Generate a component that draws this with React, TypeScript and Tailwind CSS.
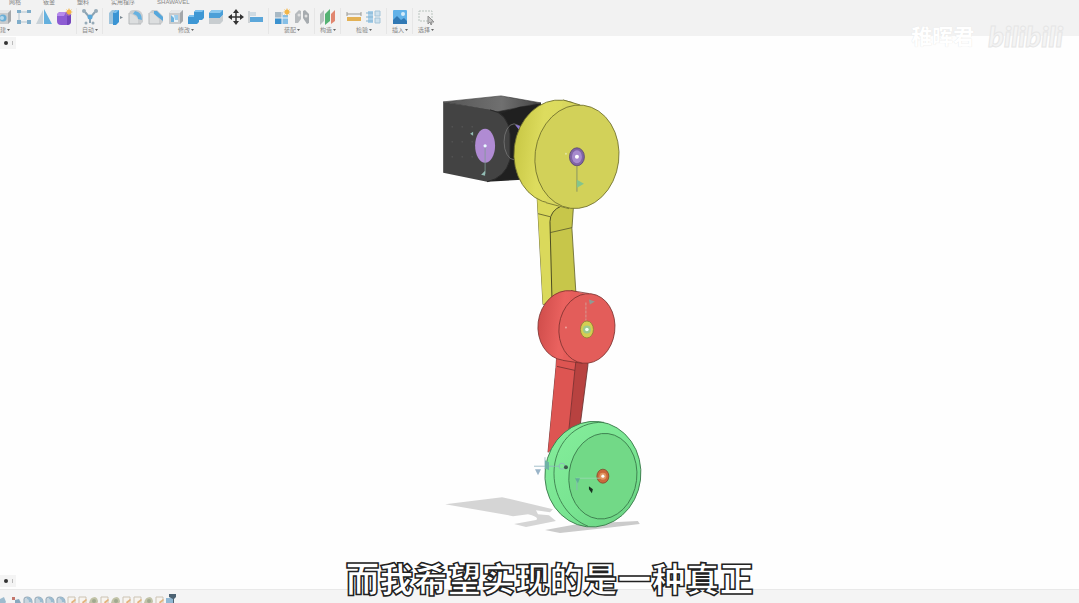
import type { ReactNode } from "react";

const Icon = ({ children }: { children: ReactNode }) => (
  <svg viewBox="0 0 18 18" className="size-[18px]" aria-hidden="true">
    {children}
  </svg>
);

const Cube = ({ children }: { children?: ReactNode }) => (
  <>
    <path d="M2 5 5 2h11v11l-3 3H2z" fill="#c9cbcd" />
    <path d="M2 5 5 2h11l-3 3z" fill="#e6e7e8" />
    <path d="M13 5l3-3v11l-3 3z" fill="#a4a7aa" />
    {children}
  </>
);

const Spark = ({ x, y }: { x: number; y: number }) => (
  <g transform={`translate(${x} ${y})`}>
    <path
      d="M0-4 1-1.500 3-3 1.700-.8 4 0 1.700.8 3 3 1 1.500 0 4-1 1.500-3 3-1.700.8-4 0-1.700-.8-3-3-1-1.500z"
      fill="#f3b13c"
    />
    <circle r="1.800" fill="#f2b648" />
  </g>
);

const icons: Record<string, ReactNode> = {
  box: (
    <Cube>
      <circle cx="8" cy="10" r="3.500" fill="#6aaed6" />
      <circle cx="7" cy="10" r="2" fill="#b5d8ec" />
    </Cube>
  ),
  sketch: (
    <>
      <path d="M4 4h10M4 4v10M4 14h10" stroke="#b4c4cf" fill="none" />
      <path d="M2 2h4v3H2zM12 2h4v3h-4zM2 12h4v4H2zM12 12h4v4h-4z" fill="#7fadca" />
    </>
  ),
  mirror: (
    <>
      <path d="M8 2v14H1z" fill="#c9d2d8" />
      <path d="M9 1 17 16H9z" fill="#64b0de" />
    </>
  ),
  form: (
    <>
      <rect x="2" y="4" width="14" height="13" rx="4" fill="#8d5cd3" />
      <path d="M2 8q0-4 4-4h5l-2 4z" fill="#b78bec" />
      <path d="M12 8v9q4 0 4-4V7z" fill="#7344ba" />
      <Spark x={14} y={4} />
    </>
  ),
  automate: (
    <>
      <path d="M4 4l5 6 5-6M9 10v5" stroke="#8ba3b3" strokeWidth="2" fill="none" />
      <circle cx="3" cy="3" r="2" fill="#97abb8" />
      <circle cx="15" cy="3" r="2" fill="#97abb8" />
      <circle cx="9" cy="9" r="2.500" fill="#5ba8d8" />
      <circle cx="5" cy="15" r="1.500" fill="#97abb8" />
      <circle cx="12" cy="15" r="1.500" fill="#97abb8" />
    </>
  ),
  pull: (
    <>
      <path d="M2 5 5 2h4v11l-3 3H2z" fill="#9fc4dc" />
      <path d="M6 5 9 2h3v12l-3 3H6z" fill="#3a94d3" />
      <path d="M6 5 9 2h3L9 5z" fill="#79bfee" />
      <path d="M13 8l3 1.500L13 11z" fill="#7d8a93" />
    </>
  ),
  fillet: (
    <>
      <path d="M2 6q0-4 5-4h2q7 0 7 8v4l-2 2H2z" fill="#cbcdcf" />
      <path d="M8 3q7 1 7 9l-4-1q0-4-5-5z" fill="#66b1e0" />
      <path d="M2 6q5 0 9 5v5H2z" fill="#dcdedf" />
      <path d="M2 5v11h12" fill="none" stroke="#b5b8ba" />
    </>
  ),
  chamfer: (
    <>
      <path d="M2 5 5 2h5l6 6v6l-2 2H2z" fill="#cbcdcf" />
      <path d="M7 3h3l6 6v4L7 6z" fill="#56a7dc" />
      <path d="M2 5h4l6 6v5H2z" fill="#dcdedf" />
      <path d="M2 5v11h12" fill="none" stroke="#b5b8ba" />
    </>
  ),
  shell: (
    <Cube>
      <path d="M4 7h7v7H4z" fill="#e9f2f8" />
      <path d="M4 7l3 3v4H4z" fill="#6bb2de" />
      <path d="M7 7h4v5H8z" fill="#9bccec" />
    </Cube>
  ),
  combine: (
    <>
      <path d="M7 4l2-2h8v8l-2 2h-3v2l-2 2H1V9l2-2h4z" fill="#3e97d4" />
      <path d="M7 4l2-2h8l-2 2zM1 9l2-2h4v2z" fill="#7cc1ef" />
    </>
  ),
  split: (
    <>
      <path d="M2 5 5 2h11v5l-3 3H2z" fill="#4b9fd8" />
      <path d="M2 5 5 2h11l-3 3z" fill="#8bc8ef" />
      <path d="M2 10h11l3-3v6l-3 3H2z" fill="#c8cdd0" />
    </>
  ),
  move: (
    <>
      <path d="M9 3v12M3 9h12" stroke="#333" strokeWidth="1.500" />
      <path d="M9 1l3 4H6zM9 17l3-4H6zM1 9l4-3v6zM17 9l-4-3v6z" fill="#333" />
    </>
  ),
  align: (
    <>
      <path d="M2 3v12" stroke="#a9b2b8" />
      <path d="M3 4h6v4H3z" fill="#cfdbe3" />
      <path d="M3 9h13v5H3z" fill="#5ca7da" />
    </>
  ),
  component: (
    <>
      <path d="M2 4h8v6H2z" fill="#a8b9c5" />
      <path d="M2 10h7v6H2z" fill="#3c92cf" />
      <path d="M9 7h6v9H9z" fill="#86bfe6" />
      <path d="M2 10h13M9 4v12" stroke="#f2f2f2" />
      <Spark x={14} y={4} />
    </>
  ),
  joint: (
    <>
      <path d="M2 15V6l4-4 2 1v8l-3 4z" fill="#b6babd" />
      <path d="M10 3l2-1 4 4v9l-2 1-4-6z" fill="#a6abaf" />
      <circle cx="6" cy="7" r="1.500" fill="#e0e0e0" />
      <circle cx="13" cy="8" r="1.500" fill="#e0e0e0" />
    </>
  ),
  plane: (
    <>
      <path d="M1 6l4-4v11l-4 4z" fill="#b9c0c0" />
      <path d="M6 6l5-5v12l-5 4z" fill="#55b273" />
      <path d="M12 6l4-4v11l-4 3z" fill="#e1866f" />
    </>
  ),
  measure: (
    <>
      <path d="M2 6h14M2 4v4M16 4v4" stroke="#9a9a96" />
      <path d="M2 9h14v4H2z" fill="#e3b155" />
    </>
  ),
  section: (
    <>
      <path d="M3 3h5v12H3z" fill="#a9d0ea" />
      <path d="M10 3h5v5h-5zM10 10h5v5h-5z" fill="#cfe2ee" stroke="#a4c4d8" />
      <path d="M1 5h7M1 9h7M1 13h7" stroke="#83b2d0" />
    </>
  ),
  insert: (
    <>
      <rect x="2" y="2" width="14" height="14" rx="1" fill="#62b2e8" />
      <path d="M2 12l4-4 4 4 3-2 3 3v3H2z" fill="#3179b4" />
      <circle cx="12" cy="6" r="2" fill="#d5ecfa" />
    </>
  ),
  select: (
    <>
      <path d="M2 3h13v10H2z" fill="none" stroke="#b9c4be" strokeDasharray="2 1" />
      <path d="M11 8v8l2-2 1 3 1-1-1-2h3z" fill="#c4c4c4" stroke="#929292" />
    </>
  ),
};

const groups = [
  { label: "创建", start: true, tools: ["box", "sketch", "mirror", "form"] },
  { label: "自动", tools: ["automate"] },
  {
    label: "修改",
    tools: ["pull", "fillet", "chamfer", "shell", "combine", "split", "move", "align"],
  },
  { label: "装配", tools: ["component", "joint"] },
  { label: "构造", tools: ["plane"] },
  { label: "检验", tools: ["measure", "section"] },
  { label: "插入", tools: ["insert"] },
  { label: "选择", tools: ["select"] },
];

const tabs = ["网格", "钣金", "塑料", "实用程序", "SHAWAVEL"];

const timeline = [
  "link", "joint", "body", "body", "body", "body", "sketch", "sketch",
  "gear", "sketch", "gear", "sketch", "sketch", "gear", "sketch", "end",
];

const TimelineIcon = ({ kind }: { kind: string }) => (
  <svg viewBox="0 0 11 12" className="h-3 w-[11px]" aria-hidden="true">
    {kind === "link" && <path d="M0 5l4-2 2 5-3 4H0z" fill="#9dbbce" />}
    {kind === "joint" && (
      <>
        <path d="M1 3h3v3H1z" fill="#c4776c" />
        <path d="M4 6l4-1 2 4-3 3H4z" fill="#89a9bf" />
      </>
    )}
    {kind === "body" && (
      <>
        <path d="M2 5q0-2 3-2 5 0 5 5v4H2z" fill="#c9d6df" stroke="#93a6b4" />
        <path d="M5 3q5 0 5 5H7Q7 5 5 5z" fill="#9bbbd0" />
      </>
    )}
    {kind === "sketch" && (
      <>
        <path d="M2 3h7v8H2z" fill="#f7f4ef" stroke="#cdc4b5" />
        <path d="M5 8l4-3 1 1-4 4z" fill="#e3b27c" />
      </>
    )}
    {kind === "gear" && (
      <>
        <path d="M1 9q1-6 6-6 3 1 3 5l-3 4H1z" fill="#c2c3a8" />
        <circle cx="6" cy="7" r="2" fill="#a0a98f" />
      </>
    )}
    {kind === "end" && (
      <>
        <path d="M1 4h7v8H1z" fill="#90b8d4" />
        <path d="M4 0h7v3L9 5v7H8V5L4 3z" fill="#4c6272" />
      </>
    )}
  </svg>
);

const PanelHandle = () => (
  <button
    aria-label="Expand panel"
    className="flex h-3 w-4 items-center justify-center gap-1 bg-[#f4f4f4]"
  >
    <span className="size-1 rounded-full bg-[#333]" />
    <span className="h-1 w-px bg-[#bbb]" />
  </button>
);

const Model = () => (
  <svg
    viewBox="0 36 1079 554"
    className="h-full w-full"
    role="img"
    aria-label="Leg assembly"
    strokeLinejoin="round"
  >
    <defs>
      <linearGradient id="top" x1="0" x2="1">
        <stop offset="0" stopColor="#555" />
        <stop offset=".6" stopColor="#707070" />
        <stop offset="1" stopColor="#444" />
      </linearGradient>
      <linearGradient id="yellowSide" x1="0" x2="1">
        <stop offset="0" stopColor="#c9c846" />
        <stop offset=".3" stopColor="#dddc5e" />
        <stop offset="1" stopColor="#d8d75e" />
      </linearGradient>
      <linearGradient id="redSide" x1="0" x2="1">
        <stop offset="0" stopColor="#d14e4c" />
        <stop offset=".4" stopColor="#ea625f" />
        <stop offset="1" stopColor="#e65e5b" />
      </linearGradient>
      <linearGradient id="greenSide" x1="0" x2="1" y2="1">
        <stop offset="0" stopColor="#86ee9c" />
        <stop offset=".6" stopColor="#78e491" />
        <stop offset="1" stopColor="#68cf80" />
      </linearGradient>
    </defs>

    {/* ground shadow */}
    <path
      d="M445 505 502 498 553 510 550 513 536 511 538 515 549 516 556 522 526 528 514 525 536 521Q540 518 528 515L513 517Z"
      fill="#d5d5d5"
    />
    <path d="M545 531 578 525 638 522 640 525 606 529 560 534Z" fill="#cbcbcb" />

    {/* motor block */}
    <path d="M490 110 541 103 541 179 487 182Z" fill="#242424" />
    <path d="M443 102 501 96 541 103 497 112Z" fill="url(#top)" stroke="#333" strokeWidth=".6" />
    <path d="M501 114 520 107 544 105 520 178 496 181Z" fill="#202020" />
    <path d="M443 102 490 110Q508 113 510 134V160Q505 178 487 182L443 173Z" fill="#434343" />
    <path d="M490 110Q508 113 510 134V160Q505 178 487 182" fill="none" stroke="#2a2a2a" />
    <ellipse cx="514" cy="142" rx="10" ry="18" fill="none" stroke="#777" strokeWidth=".8" />
    <path d="M515 125l5 1-1 4z" fill="#8d79cf" />
    <g fill="#666">
      {[452, 462, 472].map((x) => (
        <g key={x}>
          <circle cx={x} cy="127" r=".6" />
          <circle cx={x} cy="142" r=".6" />
          <circle cx={x} cy="157" r=".6" />
        </g>
      ))}
    </g>
    <ellipse cx="485" cy="146" rx="10" ry="17" fill="#b08bd3" />
    <circle cx="485" cy="146" r="1.600" fill="#e9fbff" />
    <path d="M485 148v26" stroke="#7f9a94" strokeWidth=".8" />
    <path d="M481 175l4-4v5zM470 134l3-2v4z" fill="#93bdb5" />

    {/* upper link */}
    <path d="M537 195 574 200 572 229 576 294 543 305Z" fill="#c7c64a" stroke="#5f5f2a" strokeWidth=".8" />
    <path d="M537 195 562 206Q550 211 550 222L552 300 543 305Z" fill="#dad95b" />
    <path d="M562 206Q550 211 550 222L552 300" fill="none" stroke="#4c4c22" />
    <path d="M538 214 550 217M550 233 572 228" stroke="#55552a" strokeWidth=".8" />
    <g stroke="#6b6b2b" strokeWidth=".8">
      <ellipse cx="557" cy="152" rx="43" ry="52" fill="url(#yellowSide)" transform="rotate(7 557 152)" />
      <path d="M563 100 581 105 568 209 546 204Z" fill="#d8d75e" stroke="none" />
      <path d="M563 100 580 105M546 203 569 209" />
      <ellipse cx="577" cy="157" rx="42" ry="52" fill="#d2d159" transform="rotate(7 577 157)" />
    </g>
    <ellipse cx="577" cy="157" rx="7.500" ry="9" fill="#8064a6" stroke="#57446e" strokeWidth=".8" />
    <ellipse cx="577" cy="157" rx="5" ry="6.500" fill="#a78bce" />
    <circle cx="577" cy="157" r="2" fill="#fff" />
    <path d="M577 166v26" stroke="#788663" strokeWidth=".8" />
    <path d="M577 180l7 4-7 4z" fill="#84c58c" />
    <circle cx="566" cy="154" r="1" fill="#e3e6a0" />

    {/* lower link */}
    <path d="M557 352 588 358 588 366 580 428 548 453 556 368Z" fill="#b84240" stroke="#632f2e" strokeWidth=".8" />
    <path d="M557 352 576 360 569 435 548 453 556 368Z" fill="#dd5552" />
    <path d="M576 362 575 370 569 430M557 367 575 371" fill="none" stroke="#722f2e" strokeWidth=".8" />
    <g stroke="#7d3230" strokeWidth=".8">
      <ellipse cx="567" cy="326" rx="29" ry="35" fill="url(#redSide)" transform="rotate(7 567 326)" />
      <path d="M571 291 590 295 583 363 563 361Z" fill="#e65e5b" stroke="none" />
      <path d="M571 291 589 294M563 361 583 364" />
      <ellipse cx="587" cy="329" rx="28" ry="35" fill="#e35d5a" transform="rotate(7 587 329)" />
    </g>
    <ellipse cx="587" cy="330" rx="6.500" ry="8.500" fill="#d3cf52" stroke="#8b7e33" strokeWidth=".8" />
    <circle cx="587" cy="330" r="4" fill="#9ccb8b" />
    <circle cx="587" cy="330" r="1.800" fill="#f2fff2" />
    <path d="M586 303v18" stroke="#d3aaa2" strokeWidth=".8" strokeDasharray="3 1" />
    <path d="M589 300l6 2-5 3z" fill="#8f9b94" />
    <circle cx="566" cy="328" r="1" fill="#f0a19c" />

    {/* wheel */}
    <g stroke="#3c7d4d" strokeWidth=".9">
      <ellipse cx="593" cy="475" rx="48" ry="53" fill="url(#greenSide)" transform="rotate(7 593 475)" />
      <path d="M604 423C574 422 554 446 554 474 554 502 572 521 588 527" fill="none" />
      <ellipse cx="603" cy="477" rx="34" ry="43" fill="#72d987" transform="rotate(7 603 477)" />
    </g>
    <ellipse cx="603" cy="477" rx="6" ry="7" fill="#c9683b" stroke="#7d4b2d" strokeWidth=".8" />
    <circle cx="603" cy="477" r="3.500" fill="#e09661" />
    <circle cx="603" cy="477" r="1.600" fill="#fff" />
    <g fill="none" stroke="#8fb3bf" strokeWidth=".8">
      <path d="M534 467h26M545 458v12M577 479v12" />
      <circle cx="562" cy="467" r="3" />
      <path d="M576 479h24" stroke="#9cd9b3" />
    </g>
    <path d="M535 470h6l-3 6z" fill="#9ab4c8" />
    <path d="M545 461l4 2v8l-4-2z" fill="#6fb2a5" />
    <path d="M575 479h5l-2 5z" fill="#5fae96" />
    <circle cx="566" cy="468" r="2" fill="#3b5a4b" />
    <path d="M589 487l4 3-1 4-3-4z" fill="#183020" />
  </svg>
);

const App = () => {
  return (
    <div className="relative flex h-screen flex-col overflow-hidden bg-[#fefefe] font-['Noto_Sans','Noto_Sans_CJK_SC',sans-serif]">
      <header className="h-9 shrink-0 bg-[#f2f2f2]">
        <nav className="flex h-1.5 gap-[22px] pl-[9px] font-['Liberation_Sans','Noto_Sans_CJK_SC',sans-serif] text-[6px] leading-[4px] text-[#888]">
          {tabs.map((tab) => (
            <a key={tab} href="#" className="whitespace-nowrap">
              {tab}
            </a>
          ))}
        </nav>
        <div className="-ml-[9px] flex pt-0.5">
          {groups.map(({ label, start, tools }) => (
            <div
              key={label}
              className="flex flex-col items-center border-r border-[#e6e6e6] pl-[3px] pr-0.5 last:border-0"
            >
              <div className="flex">
                {tools.map((tool) => (
                  <button key={tool} aria-label={tool} className="flex w-5 justify-center">
                    <Icon>{icons[tool]}</Icon>
                  </button>
                ))}
              </div>
              <button
                className={`flex items-center gap-px whitespace-nowrap text-[6px] leading-[8px] text-[#888] ${start ? "self-start" : ""}`}
              >
                {label}
                <svg viewBox="0 0 3 2" className="h-0.5 w-[3px]" aria-hidden="true">
                  <path d="M0 0h3L1.500 2z" fill="#666" />
                </svg>
              </button>
            </div>
          ))}
        </div>
      </header>

      <main className="relative min-h-0 flex-1">
        <Model />
        <div className="absolute left-0 top-px">
          <PanelHandle />
        </div>
        <div className="absolute bottom-0.5 left-0">
          <PanelHandle />
        </div>
      </main>

      <footer className="flex h-3.5 shrink-0 items-start overflow-hidden border-t border-[#e9e9e9] bg-[#f4f4f4] pt-1">
        {timeline.map((kind, i) => (
          <TimelineIcon key={i} kind={kind} />
        ))}
      </footer>

      <div className="absolute right-4 top-4 flex items-center gap-3.5 text-white">
        <span className="text-[21px] font-bold leading-10 [text-shadow:0_0_1px_#ddd]">稚晖君</span>
        <span className="font-['Lato'] text-[29px] font-black italic leading-10 text-[#f4f4f4] [-webkit-text-stroke:1px_#e6e6e6]">
          bilibili
        </span>
      </div>

      <p className="absolute inset-x-0 bottom-0.5 pl-5 text-center font-['Noto_Sans_CJK_SC',sans-serif] text-[34px] font-black leading-[46px] text-white [-webkit-text-stroke:1.5px_#222]">
        而我希望实现的是一种真正
      </p>
    </div>
  );
};

export default App;
